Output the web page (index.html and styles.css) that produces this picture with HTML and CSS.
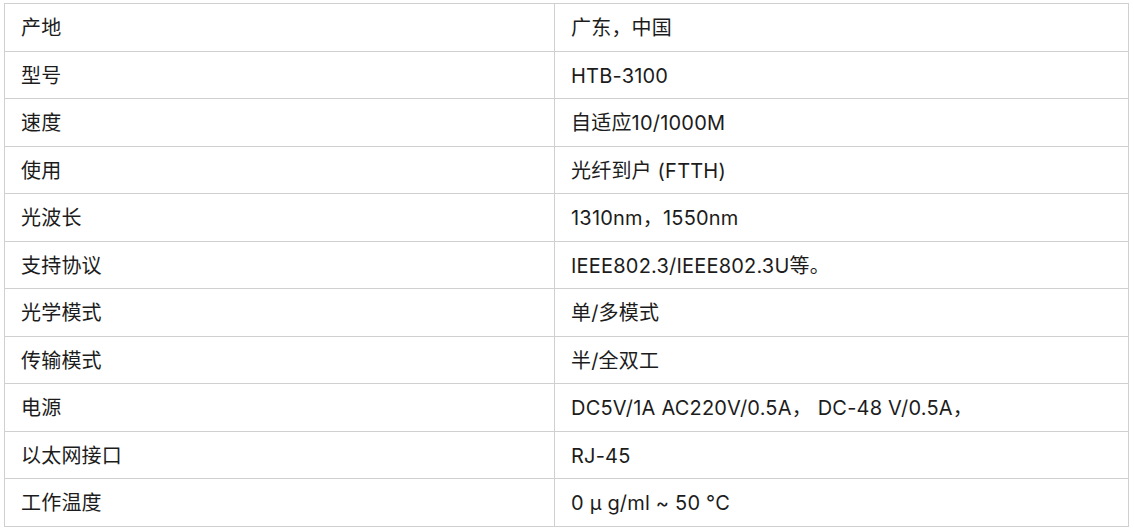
FILE: index.html
```html
<!DOCTYPE html>
<html lang="zh">
<head>
<meta charset="utf-8">
<link rel="stylesheet" href="styles.css">
</head>
<body>
<table class="spec">
<tbody>
<tr><td>产地</td><td>广东，中国</td></tr>
<tr><td>型号</td><td>HTB-3100</td></tr>
<tr><td>速度</td><td>自适应10/1000M</td></tr>
<tr><td>使用</td><td>光纤到户 (FTTH)</td></tr>
<tr><td>光波长</td><td>1310nm，1550nm</td></tr>
<tr><td>支持协议</td><td>IEEE802.3/IEEE802.3U等。</td></tr>
<tr><td>光学模式</td><td>单/多模式</td></tr>
<tr><td>传输模式</td><td>半/全双工</td></tr>
<tr><td>电源</td><td>DC5V/1A AC220V/0.5A， DC-48 V/0.5A，</td></tr>
<tr><td>以太网接口</td><td>RJ-45</td></tr>
<tr><td>工作温度</td><td>0 μ g/ml ~ 50 °C</td></tr>
</tbody>
</table>
</body>
</html>
```
FILE: styles.css
```css
html, body {
  margin: 0;
  background: #ffffff;
}
body {
  padding: 3px 5px 0 4px;
  font-family: Inter, "Noto Sans CJK SC", sans-serif;
  font-size: 20px;
  letter-spacing: 0.2px;
  color: #1c1c1c;
}
.spec {
  width: 1125px;
  border-collapse: collapse;
  table-layout: fixed;
}
.spec td {
  border: 1px solid #d0d0d0;
  padding: 9.25px 16px 7.25px;
  line-height: 30px;
  vertical-align: middle;
}
.spec td:first-child {
  width: 517px;
}
```
